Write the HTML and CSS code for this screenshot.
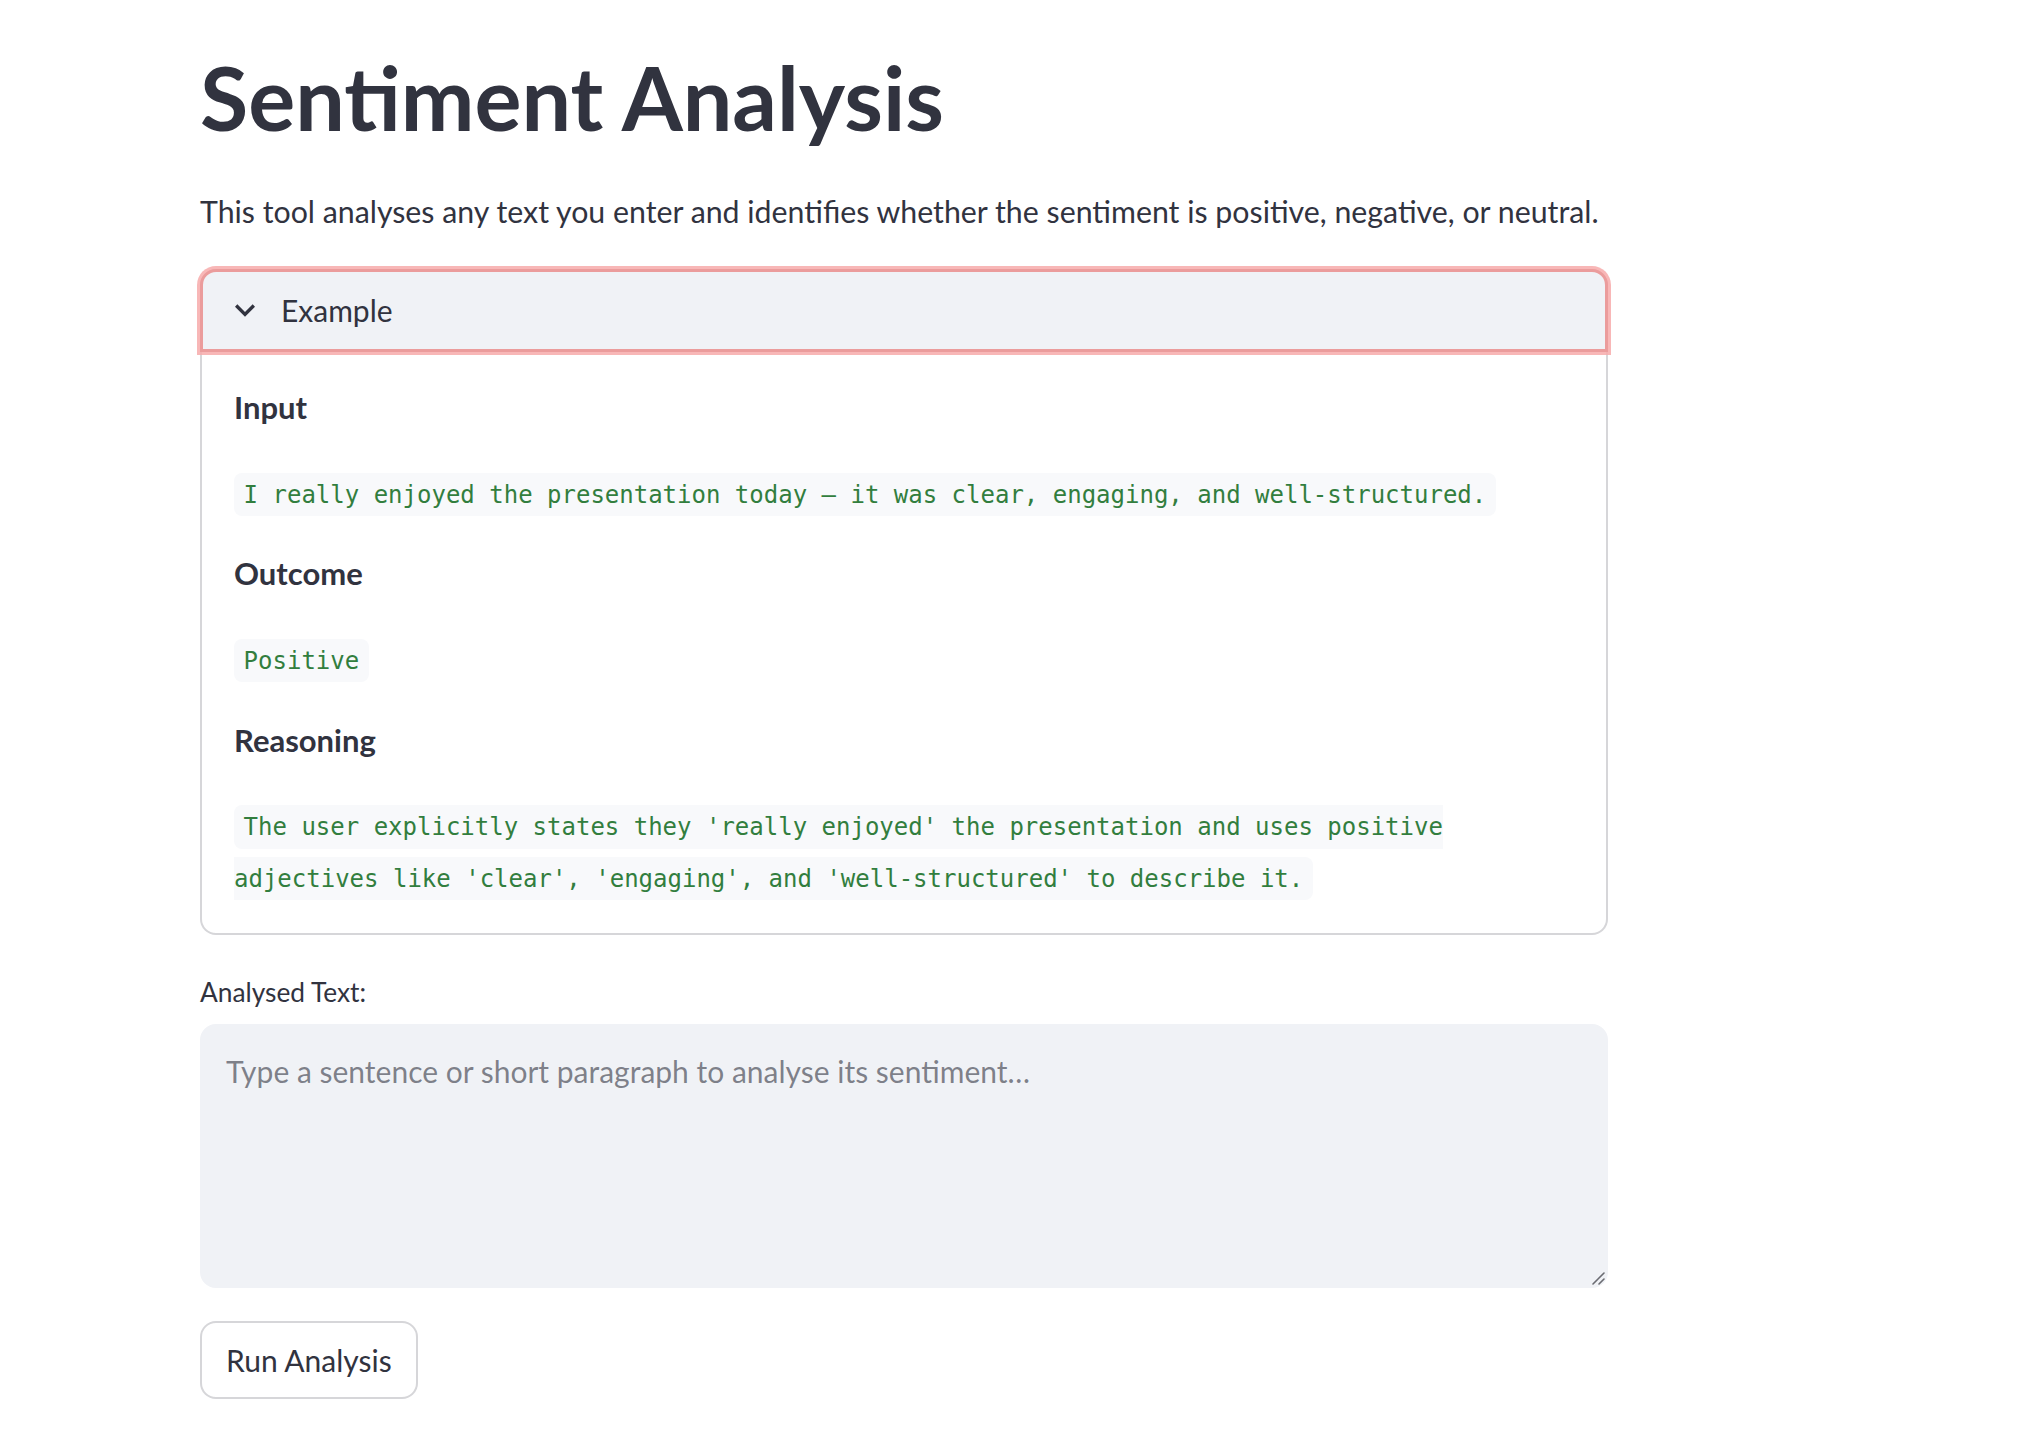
FILE: index.html
```html
<!DOCTYPE html>
<html lang="en">
<head>
<meta charset="utf-8">
<title>Sentiment Analysis</title>
<link rel="stylesheet" href="styles.css">
</head>
<body>
<main class="page">
  <h1 class="title">Sentiment Analysis</h1>
  <p class="intro">This tool analyses any text you enter and identifies whether the sentiment is positive, negative, or neutral.</p>

  <section class="expander">
    <div class="expander-header">
      <svg class="chevron" viewBox="0 0 24 24" width="40" height="40" aria-hidden="true">
        <path d="M16.59 8.59L12 13.17 7.41 8.59 6 10l6 6 6-6z" fill="#31333f"/>
      </svg>
      <span class="expander-label">Example</span>
    </div>
    <div class="expander-body">
      <p class="md strong">Input</p>
      <p class="md"><code>I really enjoyed the presentation today — it was clear, engaging, and well-structured.</code></p>
      <p class="md strong">Outcome</p>
      <p class="md"><code>Positive</code></p>
      <p class="md strong">Reasoning</p>
      <p class="md last"><code>The user explicitly states they 'really enjoyed' the presentation and uses positive adjectives like 'clear', 'engaging', and 'well-structured' to describe it.</code></p>
    </div>
  </section>

  <label class="field-label" for="txt">Analysed Text:</label>
  <div class="textarea-wrap">
    <textarea id="txt" class="textarea" placeholder="Type a sentence or short paragraph to analyse its sentiment…"></textarea>
    <svg class="resizer" viewBox="0 0 14 14" width="14" height="14" aria-hidden="true">
      <path d="M13 2L2 13M13 8L8 13" stroke="#6b6c72" stroke-width="1.6" stroke-linecap="round" fill="none"/>
    </svg>
  </div>

  <button class="button" type="button">Run Analysis</button>
</main>
</body>
</html>
```

FILE: styles.css
```css
html, body {
  margin: 0;
  padding: 0;
  background: #ffffff;
}

body {
  font-family: Lato, "Noto Sans", sans-serif;
  color: #31333f;
}

.page {
  width: 1408px;
  margin-left: 200px;
  display: flex;
  flex-direction: column;
  align-items: flex-start;
}

.title {
  margin: 0;
  padding: 45px 0 35px;
  font-size: 88px;
  font-weight: 700;
  line-height: 1.2;
  color: #31333f;
}

.intro {
  margin: 0;
  font-size: 30.3px;
  line-height: 51.2px;
}

.expander {
  align-self: stretch;
  margin-top: 32px;
  border: 2px solid rgba(49, 51, 63, 0.2);
  border-radius: 16px;
  background: #ffffff;
}

.expander-header {
  margin: -2px -2px 0;
  display: flex;
  align-items: center;
  gap: 16px;
  padding: 13px 24px 13px 22px;
  border: 3px solid #eb9c9c;
  box-shadow: 0 0 0 3px rgba(247, 170, 170, 0.85);
  border-radius: 16px 16px 0 0;
  background: #f0f2f6;
}

.chevron {
  display: block;
  flex: none;
}

.expander-label {
  font-size: 30px;
  line-height: 51.2px;
}

.expander-body {
  padding: 30px 32px 33px;
}

.md {
  margin: 0 0 32px;
  font-size: 30px;
  line-height: 51.2px;
}

.md.last {
  margin-bottom: 0;
}

.strong {
  font-weight: 700;
  font-size: 31px;
}

code {
  font-family: "DejaVu Sans Mono", "Liberation Mono", monospace;
  font-size: 24px;
  line-height: 1;
  padding: 0.32em 0.4em;
  border-radius: 8px;
  background: #f8f9fb;
  color: #327e3e;
}

.field-label {
  margin-top: 37px;
  font-size: 26.3px;
  line-height: 40px;
  margin-bottom: 12px;
}

.textarea-wrap {
  position: relative;
  align-self: stretch;
  display: flex;
}

.textarea {
  box-sizing: border-box;
  flex: 1;
  height: 264px;
  margin: 0;
  padding: 20px 24px;
  border: 2px solid #f0f2f6;
  border-radius: 16px;
  background: #f0f2f6;
  font-family: Lato, "Noto Sans", sans-serif;
  font-size: 30px;
  line-height: 51.2px;
  color: #31333f;
  resize: none;
  outline: none;
}

.textarea::placeholder {
  color: rgba(49, 51, 63, 0.6);
}

.resizer {
  position: absolute;
  right: 3px;
  bottom: 3px;
  pointer-events: none;
}

.button {
  margin-top: 33px;
  padding: 11.4px 24px;
  border: 2px solid rgba(49, 51, 63, 0.2);
  border-radius: 16px;
  background: #ffffff;
  font-family: Lato, "Noto Sans", sans-serif;
  font-size: 30px;
  line-height: 51.2px;
  color: #31333f;
  cursor: pointer;
}
```
